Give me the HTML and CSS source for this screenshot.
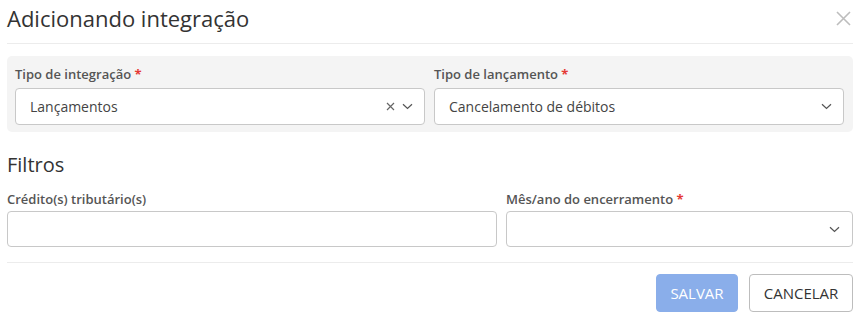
FILE: index.html
```html
<!DOCTYPE html>
<html lang="pt-BR">
<head>
<meta charset="utf-8">
<title>Adicionando integração</title>
<link rel="stylesheet" href="styles.css">
</head>
<body>
<div class="modal">
  <div class="modal-header">
    <h1 class="modal-title">Adicionando integração</h1>
    <button class="close-btn" aria-label="Fechar">
      <svg width="15" height="15" viewBox="0 0 15 15"><path d="M1 1L14 14M14 1L1 14" stroke="#bdbdbd" stroke-width="1.6" fill="none"/></svg>
    </button>
  </div>

  <div class="panel">
    <div class="field">
      <label class="label">Tipo de integração <span class="req">*</span></label>
      <div class="select">
        <span class="value">Lançamentos</span>
        <span class="icons">
          <svg class="clear" width="9" height="9" viewBox="0 0 9 9"><path d="M1 1L8 8M8 1L1 8" stroke="#666" stroke-width="1.2" fill="none"/></svg>
          <svg class="chev" width="11" height="7" viewBox="0 0 11 7"><path d="M1 1.2L5.5 5.5L10 1.2" stroke="#555" stroke-width="1.2" fill="none"/></svg>
        </span>
      </div>
    </div>
    <div class="field">
      <label class="label">Tipo de lançamento <span class="req">*</span></label>
      <div class="select">
        <span class="value">Cancelamento de débitos</span>
        <span class="icons">
          <svg class="chev" width="11" height="7" viewBox="0 0 11 7"><path d="M1 1.2L5.5 5.5L10 1.2" stroke="#555" stroke-width="1.2" fill="none"/></svg>
        </span>
      </div>
    </div>
  </div>

  <h2 class="section-title">Filtros</h2>

  <div class="filters">
    <div class="field">
      <label class="label">Crédito(s) tributário(s)</label>
      <div class="input"></div>
    </div>
    <div class="field">
      <label class="label">Mês/ano do encerramento <span class="req">*</span></label>
      <div class="input select-empty">
        <span class="icons">
          <svg class="chev" width="11" height="7" viewBox="0 0 11 7"><path d="M1 1.2L5.5 5.5L10 1.2" stroke="#555" stroke-width="1.2" fill="none"/></svg>
        </span>
      </div>
    </div>
  </div>

  <div class="footer">
    <button class="btn btn-primary">SALVAR</button>
    <button class="btn btn-outline">CANCELAR</button>
  </div>
</div>
</body>
</html>
```

FILE: styles.css
```css
* { box-sizing: border-box; }
html, body { margin: 0; padding: 0; background: #fff; }
body {
  font-family: "Open Sans", "Liberation Sans", sans-serif;
  color: #333;
  width: 862px;
  height: 319px;
  overflow: hidden;
}
.modal {
  padding: 0 9px 0 7px;
}
.modal-header {
  display: flex;
  align-items: flex-start;
  justify-content: space-between;
  padding: 4px 0 11px;
  border-bottom: 1px solid #ececec;
}
.modal-title {
  margin: 0;
  font-size: 22px;
  line-height: 28px;
  font-weight: 400;
  color: #333;
}
.close-btn {
  border: 0;
  background: none;
  padding: 0;
  margin: 7px 2px 0 0;
  width: 15px;
  height: 15px;
  display: flex;
}
.panel {
  margin-top: 12px;
  background: #f4f4f4;
  border-radius: 5px;
  padding: 8px 8px 7px;
  display: grid;
  grid-template-columns: 410px 410px;
  column-gap: 9px;
}
.field { display: flex; flex-direction: column; }
.label {
  font-size: 13px;
  line-height: 20px;
  font-weight: 600;
  color: #555;
  margin-bottom: 4px;
}
.req { color: #e53935; font-weight: 700; }
.select {
  height: 37px;
  background: #fff;
  border: 1px solid #c8c8c8;
  border-radius: 4px;
  display: flex;
  align-items: center;
  padding: 0 11px 0 14px;
  font-size: 14px;
  color: #444;
}
.value { flex: 1; }
.icons { display: flex; align-items: center; gap: 7px; }
.section-title {
  margin: 19px 0 0;
  font-size: 20px;
  line-height: 27px;
  font-weight: 400;
  color: #333;
}
.filters {
  margin-top: 11px;
  display: grid;
  grid-template-columns: 490px 1fr;
  column-gap: 9px;
}
.filters .label { margin-bottom: 2px; }
.input {
  height: 36px;
  border: 1px solid #c8c8c8;
  border-radius: 4px;
  background: #fff;
}
.select-empty {
  display: flex;
  align-items: center;
  justify-content: flex-end;
  padding-right: 12px;
}
.footer {
  margin-top: 15px;
  border-top: 1px solid #ececec;
  padding-top: 11px;
  display: flex;
  justify-content: flex-end;
  gap: 11px;
}
.btn {
  height: 38px;
  border-radius: 4px;
  font-family: "Open Sans", "Liberation Sans", sans-serif;
  font-size: 15px;
  padding: 0;
  cursor: pointer;
}
.btn-primary {
  width: 82px;
  background: #8aaeea;
  border: 1px solid #8aaeea;
  color: #fff;
  font-weight: 400;
}
.btn-outline {
  width: 104px;
  background: #fff;
  border: 1px solid #bdbdbd;
  color: #333;
}
```
